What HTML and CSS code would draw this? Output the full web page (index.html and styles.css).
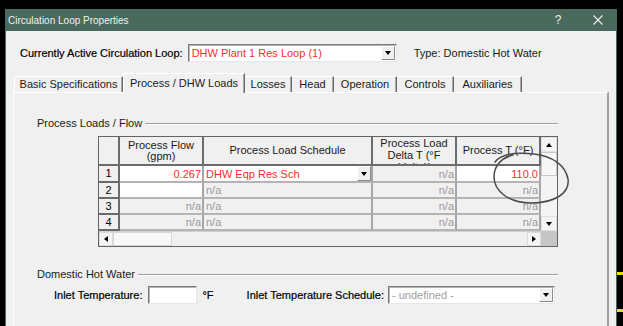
FILE: index.html
```html
<!DOCTYPE html>
<html>
<head>
<meta charset="utf-8">
<title>Circulation Loop Properties</title>
<link rel="stylesheet" href="styles.css">
</head>
<body>
<div class="desktop">
  <div class="window">
    <div class="titlebar">
      <span class="title">Circulation Loop Properties</span>
      <span class="tb-help">?</span>
      <svg class="tb-close" width="10" height="10" viewBox="0 0 10 10"><path d="M0.5 0.5 L9.5 9.5 M9.5 0.5 L0.5 9.5" stroke="#eef2ef" stroke-width="1.1" fill="none"/></svg>
    </div>
    <div class="frame">
      <div class="loop-row">
        <span class="lbl-strong">Currently Active Circulation Loop:</span>
        <div class="combo combo-loop">
          <span class="combo-text red">DHW Plant 1 Res Loop (1)</span>
          <span class="drop-btn"><i class="tri-down"></i></span>
        </div>
        <span class="type-lbl">Type: Domestic Hot Water</span>
      </div>

      <div class="tabs">
        <div class="tab tab-first w-basic">Basic Specifications</div>
        <div class="tab tab-active w-process">Process / DHW Loads</div>
        <div class="tab w-losses">Losses</div>
        <div class="tab w-head">Head</div>
        <div class="tab w-operation">Operation</div>
        <div class="tab w-controls">Controls</div>
        <div class="tab w-aux">Auxiliaries</div>
      </div>

      <div class="panel">
        <div class="group-head gh-loads">
          <span class="group-lbl">Process Loads / Flow</span>
          <span class="group-line"></span>
        </div>

        <div class="grid">
          <div class="grid-main">
            <div class="cells">
              <div class="hc"></div>
              <div class="hc">Process Flow<br>(gpm)</div>
              <div class="hc">Process Load Schedule</div>
              <div class="hc hc-top">Process Load<br>Delta T (°F<br>(delta))</div>
              <div class="hc">Process T (°F)</div>

              <div class="rh">1</div>
              <div class="dc white r red">0.267</div>
              <div class="dc white red sched">DHW Eqp Res Sch<span class="cell-btn"><i class="tri-down"></i></span></div>
              <div class="dc r na">n/a</div>
              <div class="dc white r red">110.0</div>

              <div class="rh">2</div>
              <div class="dc white"></div>
              <div class="dc na">n/a</div>
              <div class="dc r na">n/a</div>
              <div class="dc r na">n/a</div>

              <div class="rh">3</div>
              <div class="dc r na">n/a</div>
              <div class="dc na">n/a</div>
              <div class="dc r na">n/a</div>
              <div class="dc r na">n/a</div>

              <div class="rh">4</div>
              <div class="dc r na">n/a</div>
              <div class="dc na">n/a</div>
              <div class="dc r na">n/a</div>
              <div class="dc r na">n/a</div>
            </div>
            <div class="vscroll">
              <span class="sb-btn"><i class="tri-up"></i></span>
              <span class="sb-thumb-v"></span>
              <span class="sb-track"></span>
              <span class="sb-btn sb-btn-down"><i class="tri-down"></i></span>
            </div>
          </div>
          <div class="grid-foot">
            <div class="hscroll">
              <span class="sb-btn-h"><i class="tri-left"></i></span>
              <span class="sb-thumb-h"></span>
              <span class="sb-track"></span>
              <span class="sb-btn-h"><i class="tri-right"></i></span>
            </div>
            <div class="corner"></div>
          </div>
          <svg class="scribble" width="90" height="62" viewBox="0 0 90 62">
            <path d="M6 13 C11 6, 25 3, 45 5 C62 7, 76 15, 79 30 C81 44, 66 54, 42 54 C20 54, 5 42, 5 28 C5 17, 12 9, 24 6" stroke="#4a4a4a" stroke-width="1.5" fill="none" stroke-linecap="round"/>
          </svg>
        </div>

        <div class="group-head gh-dhw">
          <span class="group-lbl">Domestic Hot Water</span>
          <span class="group-line"></span>
        </div>

        <div class="inlet-row">
          <span class="lbl-strong">Inlet Temperature:</span>
          <span class="textbox"></span>
          <span class="unit lbl-strong">°F</span>
          <span class="lbl-strong sched-lbl">Inlet Temperature Schedule:</span>
          <div class="combo combo-sched">
            <span class="combo-text grey">- undefined -</span>
            <span class="drop-btn"><i class="tri-down"></i></span>
          </div>
        </div>
      </div>
    </div>
  </div>
  <div class="edge-strip">
    <i class="dash dash-1"></i>
    <i class="dash dash-2"></i>
  </div>
</div>
</body>
</html>
```

FILE: styles.css
```css
* { box-sizing: border-box; }

body {
  margin: 0;
  background: #000;
  font-family: "Liberation Sans", Arial, sans-serif;
  font-size: 11px;
  color: #1a1a1a;
}

.desktop {
  display: flex;
  height: 326px;
  overflow: hidden;
}

.window {
  margin: 9px 0 0 5px;
  width: 612px;
  display: flex;
  flex-direction: column;
}

.titlebar {
  height: 22px;
  flex: none;
  background: #4a695d;
  display: flex;
  align-items: center;
  color: #eef2ef;
}

.title {
  flex: 1;
  padding-left: 3px;
  font-size: 10px;
}

.tb-help {
  width: 12px;
  text-align: center;
  font-size: 12px;
  margin-right: 29px;
}

.tb-close {
  margin-right: 14px;
}

.frame {
  flex: 1;
  background: #f0f0f0;
  border-left: 1px solid #4a695d;
  border-right: 1px solid #4a695d;
  display: flex;
  flex-direction: column;
}

.lbl-strong {
  color: #000;
  -webkit-text-stroke: 0.2px #000;
  white-space: nowrap;
}

.red { color: #ff2b2b; }
.grey { color: #a0a0a0; }

.loop-row {
  margin: 13px 0 0 14px;
  height: 18px;
  display: flex;
  align-items: center;
}

.combo {
  height: 18px;
  display: flex;
  align-items: center;
  background: #fff;
  border: 1px solid;
  border-color: #7a7a7a #e6e6e6 #e6e6e6 #7a7a7a;
  box-shadow: inset 1px 1px 0 #b4b4b4;
  padding: 1px 1px 1px 3px;
}

.combo-loop {
  margin-left: 5px;
  width: 209px;
}

.combo-text {
  flex: 1;
  white-space: nowrap;
  overflow: hidden;
}

.drop-btn, .cell-btn {
  width: 14px;
  height: 14px;
  background: #f0f0f0;
  border: 1px solid;
  border-color: #fff #8a8a8a #8a8a8a #fff;
  display: flex;
  align-items: center;
  justify-content: center;
}

.type-lbl {
  margin-left: 17px;
  color: #1a1a1a;
}

.tri-down {
  width: 0;
  height: 0;
  border-left: 3.5px solid transparent;
  border-right: 3.5px solid transparent;
  border-top: 4px solid #000;
}

.tri-up {
  width: 0;
  height: 0;
  border-left: 3.5px solid transparent;
  border-right: 3.5px solid transparent;
  border-bottom: 4px solid #000;
}

.tri-left {
  width: 0;
  height: 0;
  border-top: 3.5px solid transparent;
  border-bottom: 3.5px solid transparent;
  border-right: 4px solid #000;
}

.tri-right {
  width: 0;
  height: 0;
  border-top: 3.5px solid transparent;
  border-bottom: 3.5px solid transparent;
  border-left: 4px solid #000;
}

/* Tabs */
.tabs {
  margin: 11px 0 0 7px;
  padding-left: 1px;
  height: 19px;
  display: flex;
  align-items: flex-end;
}

.tab {
  height: 16px;
  line-height: 15px;
  text-align: center;
  white-space: nowrap;
  border-top: 1px solid #fff;
  border-right: 1px solid #6a6a6a;
  box-shadow: inset -1px 0 0 #a8a8a8;
  color: #1a1a1a;
}

.tab-first { border-left: 1px solid #fff; }

.tab-active {
  height: 20px;
  line-height: 18px;
  margin-bottom: -1px;
  position: relative;
  z-index: 1;
  background: #f0f0f0;
  border-left: 1px solid #fff;
}

.w-basic { width: 109px; }
.w-process { width: 122px; }
.w-losses { width: 47px; }
.w-head { width: 42px; }
.w-operation { width: 63px; }
.w-controls { width: 57px; }
.w-aux { width: 68px; }

/* Panel */
.panel {
  margin-left: 7px;
  width: 596px;
  flex: 1;
  border-top: 1px solid #fff;
  border-left: 1px solid #fff;
  border-right: 2px solid #a0a0a0;
  display: flex;
  flex-direction: column;
}

.group-head {
  width: 521px;
  height: 14px;
  display: flex;
  align-items: center;
  margin-left: 23px;
}

.gh-loads { margin-top: 23px; }
.gh-dhw { margin-top: 20px; }

.group-lbl {
  white-space: nowrap;
  color: #1a1a1a;
}

.group-line {
  flex: 1;
  margin-left: 3px;
  height: 2px;
  border-top: 1px solid #a0a0a0;
  border-bottom: 1px solid #fff;
  margin-top: 2px;
}

/* Grid */
.grid {
  position: relative;
  margin: 6px 0 0 84px;
  width: 460px;
  border: 1px solid #646464;
  background: #f0f0f0;
}

.grid-main { display: flex; }

.cells {
  display: grid;
  grid-template-columns: 21px 84px 169px 84px 84px;
  grid-template-rows: 29px 17px 16px 16px 16px;
}

.hc, .rh {
  border-right: 2px solid #6c6c6c;
  border-bottom: 2px solid #6c6c6c;
  background: #f0f0f0;
  display: flex;
  align-items: center;
  justify-content: center;
  text-align: center;
  line-height: 11px;
  overflow: hidden;
  color: #1a1a1a;
}

.hc-top {
  align-items: flex-start;
  line-height: 12px;
}

.rh { color: #000; }

.dc {
  border-right: 2px solid #a6a6a6;
  border-bottom: 2px solid #b4b4b4;
  background: #f0f0f0;
  display: flex;
  align-items: center;
  padding: 0 1px 0 2px;
  white-space: nowrap;
  overflow: hidden;
}

.dc.white { background: #fff; }
.dc.r { justify-content: flex-end; }
.dc.na { color: #9a9a9a; }

.sched {
  justify-content: space-between;
  padding-right: 0;
}

.cell-btn {
  width: 14px;
  height: 15px;
}

.vscroll {
  width: 16px;
  display: flex;
  flex-direction: column;
  background: #f4f4f4;
}

.sb-btn {
  height: 15px;
  flex: none;
  display: flex;
  align-items: center;
  justify-content: center;
  border: 1px solid #e0e0e0;
  background: #f4f4f4;
}

.sb-thumb-v {
  height: 24px;
  flex: none;
  border: 1px solid #c8c8c8;
  background: #f7f7f7;
}

.sb-track { flex: 1; }

.grid-foot {
  display: flex;
  height: 15px;
}

.hscroll {
  width: 442px;
  display: flex;
  background: #f0f0f0;
  border-top: 1px solid #d0d0d0;
}

.sb-btn-h {
  width: 14px;
  flex: none;
  display: flex;
  align-items: center;
  justify-content: center;
  border: 1px solid #dcdcdc;
  background: #f4f4f4;
}

.sb-thumb-h {
  width: 59px;
  flex: none;
  border: 1px solid #d6d6d6;
  background: #f8f8f8;
}

.corner {
  flex: 1;
  background: #c6c6c6;
}

.scribble {
  position: absolute;
  left: 390px;
  top: 12px;
}

/* Inlet row */
.inlet-row {
  margin: 5px 0 0 40px;
  height: 18px;
  display: flex;
  align-items: center;
}

.textbox {
  margin-left: 6px;
  width: 49px;
  height: 18px;
  background: #fff;
  border: 1px solid;
  border-color: #7a7a7a #e6e6e6 #e6e6e6 #7a7a7a;
  box-shadow: inset 1px 1px 0 #b4b4b4;
}

.unit { margin-left: 5px; }

.sched-lbl { margin-left: 33px; }

.combo-sched {
  margin-left: 4px;
  width: 167px;
}

/* Desktop edge */
.edge-strip {
  width: 6px;
  display: flex;
  flex-direction: column;
}

.dash {
  display: block;
  height: 3px;
  background: #e8df10;
}

.dash-1 { margin-top: 272px; }
.dash-2 { margin-top: 34px; }
```
